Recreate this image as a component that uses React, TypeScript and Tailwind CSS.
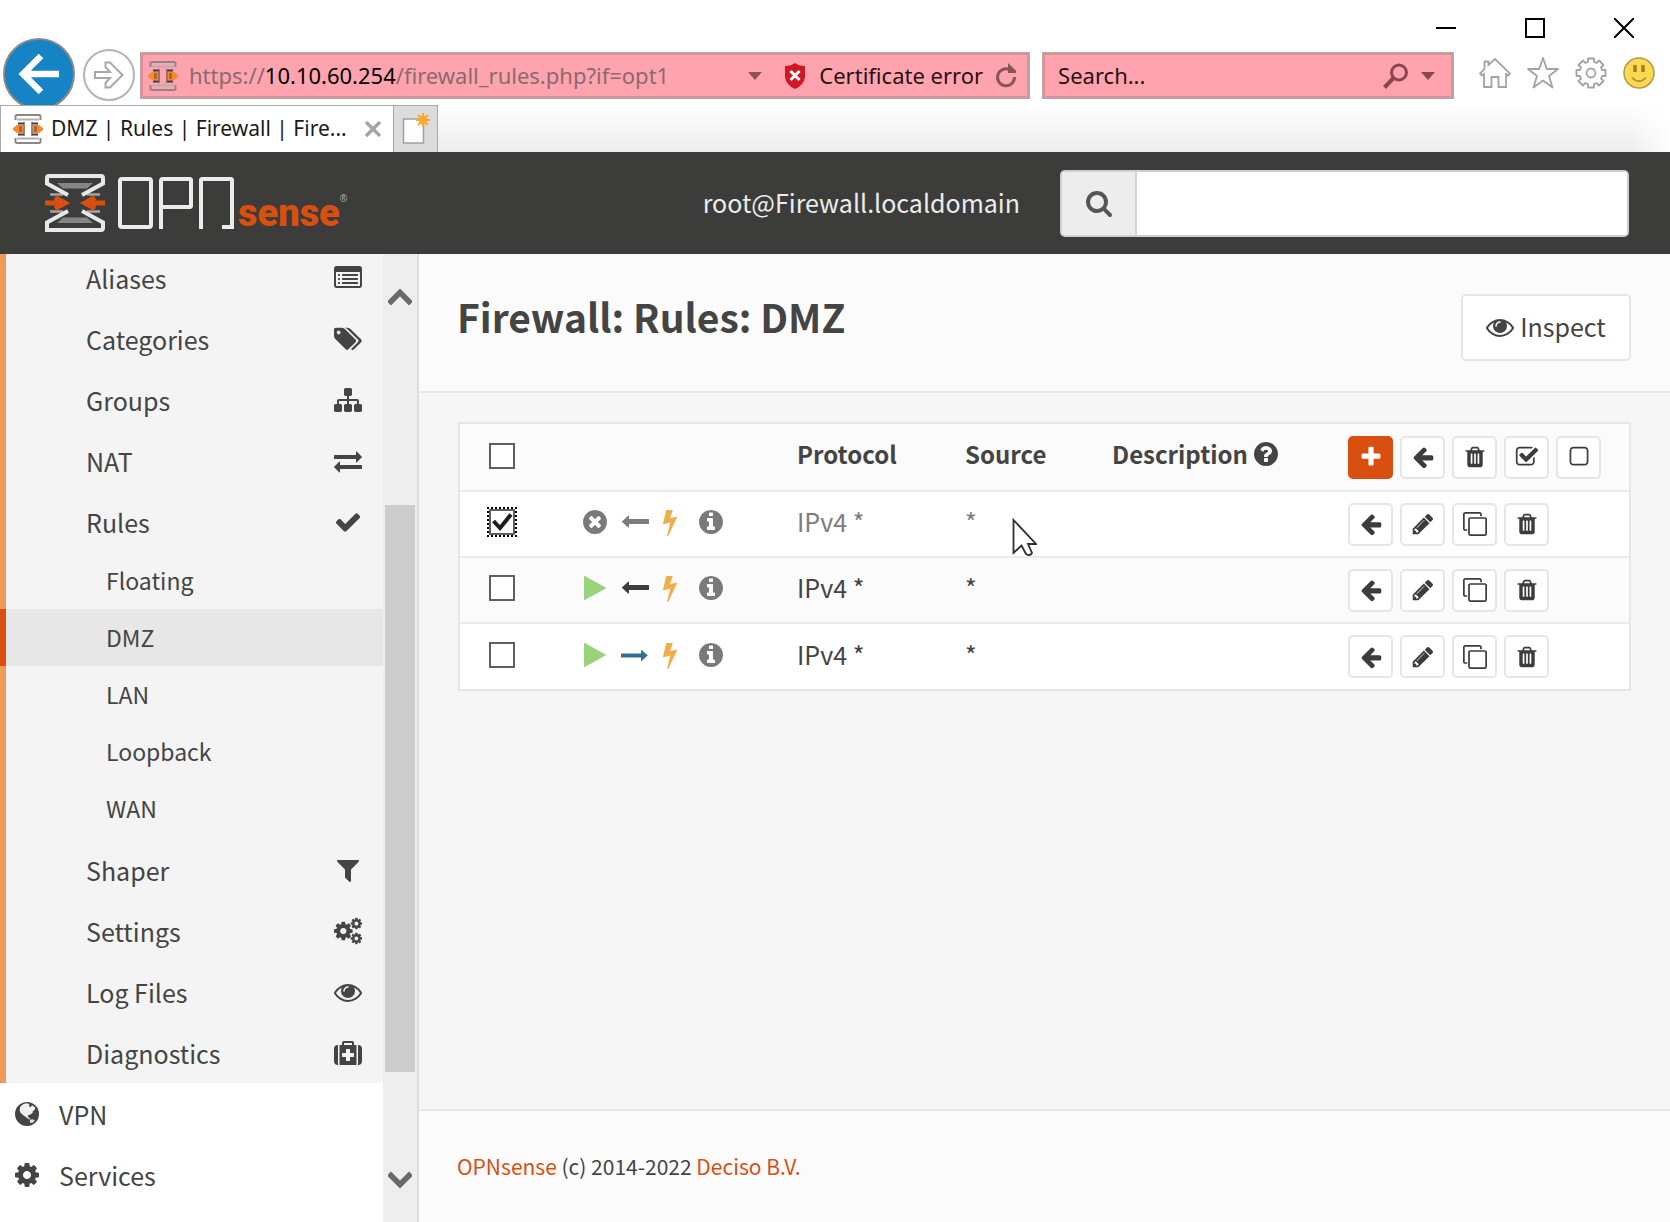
import React from "react";

const CIRCLE =
  "M1664 896q0 209-103 385.5t-279.5 279.5-385.5 103-385.5-103-279.5-279.5-103-385.5 103-385.5 279.5-279.5 385.5-103 385.5 103 279.5 279.5 103 385.5z";

const COG =
  "M1152 896q0-106-75-181t-181-75-181 75-75 181 75 181 181 75 181-75 75-181zm512-109v222q0 12-8 23t-20 13l-185 28q-19 54-39 91 35 50 107 138 10 12 10 25t-9 23q-27 37-99 108t-94 71q-12 0-26-9l-138-108q-44 23-91 38-16 136-29 186-7 28-36 28h-222q-14 0-24.5-8.5t-11.5-21.5l-28-184q-49-16-90-37l-141 107q-10 9-25 9-14 0-25-11-126-114-165-168-7-10-7-23 0-12 8-23 15-21 51-66.5t54-70.5q-27-50-41-99l-183-27q-13-2-21-12.5t-8-23.5v-222q0-12 8-23t19-13l186-28q14-46 39-92-40-57-107-138-10-12-10-24 0-10 9-23 26-36 98.5-107.5t94.5-71.5q13 0 26 10l138 107q44-23 91-38 16-136 29-186 7-28 36-28h222q14 0 24.5 8.5t11.5 21.5l28 184q49 16 90 37l142-107q9-9 24-9 13 0 25 10 129 119 165 170 7 8 7 22 0 12-8 23-15 21-51 66.5t-54 70.5q26 50 41 98l183 28q13 2 21 12.5t8 23.5z";

const LINE = "q0 13-9.5 22.5t-22.5 9.5h-960q-13 0-22.5-9.5t-9.5-22.5v-64q0-13 9.5-22.5t22.5-9.5h960q13 0 22.5 9.5t9.5 22.5z";
const DOT = "q0 13-9.5 22.5t-22.5 9.5h-64q-13 0-22.5-9.5t-9.5-22.5v-64q0-13 9.5-22.5t22.5-9.5h64q13 0 22.5 9.5t9.5 22.5z";

const PATHS = {
  arrowLeft:
    "M1664 896v128q0 53-32.5 90.5t-84.5 37.5h-704l293 294q38 36 38 90t-38 90l-75 76q-37 37-90 37-52 0-91-37l-651-652q-37-37-37-90 0-52 37-91l651-650q38-38 91-38 52 0 90 38l75 74q38 38 38 91t-38 91l-293 293h704q52 0 84.5 37.5t32.5 90.5z",
  check:
    "M1671 566q0 40-28 68l-724 724-136 136q-28 28-68 28t-68-28l-136-136-362-362q-28-28-28-68t28-68l136-136q28-28 68-28t68 28l294 295 656-657q28-28 68-28t68 28l136 136q28 28 28 68z",
  plus: "M1600 736v192q0 40-28 68t-68 28h-416v416q0 40-28 68t-68 28h-192q-40 0-68-28t-28-68v-416h-416q-40 0-68-28t-28-68v-192q0-40 28-68t68-28h416v-416q0-40 28-68t68-28h192q40 0 68 28t28 68v416h416q40 0 68 28t28 68z",
  search:
    "M1216 832q0-185-131.5-316.5t-316.5-131.5-316.5 131.5-131.5 316.5 131.5 316.5 316.5 131.5 316.5-131.5 131.5-316.5zm512 832q0 52-38 90t-90 38q-54 0-90-38l-343-342q-179 124-399 124-143 0-273.5-55.5t-225-150-150-225-55.5-273.5 55.5-273.5 150-225 225-150 273.5-55.5 273.5 55.5 225 150 150 225 55.5 273.5q0 220-124 399l343 343q37 37 37 90z",
  filter:
    "M1595 295q17 41-14 70l-493 493v742q0 42-39 59-13 5-25 5-27 0-45-19l-256-256q-19-19-19-45v-486l-493-493q-31-29-14-70 17-39 59-39h1280q42 0 59 39z",
  trash:
    "M704 1376v-704q0-14-9-23t-23-9h-64q-14 0-23 9t-9 23v704q0 14 9 23t23 9h64q14 0 23-9t9-23zm256 0v-704q0-14-9-23t-23-9h-64q-14 0-23 9t-9 23v704q0 14 9 23t23 9h64q14 0 23-9t9-23zm256 0v-704q0-14-9-23t-23-9h-64q-14 0-23 9t-9 23v704q0 14 9 23t23 9h64q14 0 23-9t9-23zm-544-992h448l-48-117q-7-9-17-11h-317q-10 2-17 11zm928 32v64q0 14-9 23t-23 9h-96v948q0 83-47 143.5t-113 60.5h-832q-66 0-113-58.5t-47-141.5v-952h-96q-14 0-23-9t-9-23v-64q0-14 9-23t23-9h309l70-167q15-37 54-63t79-26h320q40 0 79 26t54 63l70 167h309q14 0 23 9t9 23z",
  pencil:
    "M491 1536l91-91-235-235-91 91v107h128v128h107zm523-928q0-22-22-22-10 0-17 7l-542 542q-7 7-7 17 0 22 22 22 10 0 17-7l542-542q7-7 7-17zm-54-192l416 416-832 832h-416v-416zm683 96q0 53-37 90l-166 166-416-416 166-165q36-38 90-38 53 0 91 38l235 234q37 39 37 91z",
  clone:
    "M1664 1632v-1088q0-13-9.5-22.5t-22.5-9.5h-1088q-13 0-22.5 9.5t-9.5 22.5v1088q0 13 9.5 22.5t22.5 9.5h1088q13 0 22.5-9.5t9.5-22.5zm128-1088v1088q0 66-47 113t-113 47h-1088q-66 0-113-47t-47-113v-1088q0-66 47-113t113-47h1088q66 0 113 47t47 113zm-384-384v160h-128v-160q0-13-9.5-22.5t-22.5-9.5h-1088q-13 0-22.5 9.5t-9.5 22.5v1088q0 13 9.5 22.5t22.5 9.5h160v128h-160q-66 0-113-47t-47-113v-1088q0-66 47-113t113-47h1088q66 0 113 47t47 113z",
  checkSquare:
    "M1472 930v318q0 119-84.5 203.5t-203.5 84.5h-832q-119 0-203.5-84.5t-84.5-203.5v-832q0-119 84.5-203.5t203.5-84.5h832q63 0 117 25 15 7 18 23 3 17-9 29l-49 49q-10 10-23 10-3 0-9-2-23-6-45-6h-832q-66 0-113 47t-47 113v832q0 66 47 113t113 47h832q66 0 113-47t47-113v-254q0-13 9-22l64-64q10-10 23-10 6 0 12 3 20 8 20 29zm231-489l-814 814q-24 24-57 24t-57-24l-430-430q-24-24-24-57t24-57l110-110q24-24 57-24t57 24l263 263 647-647q24-24 57-24t57 24l110 110q24 24 24 57t-24 57z",
  square:
    "M1312 256h-832q-66 0-113 47t-47 113v832q0 66 47 113t113 47h832q66 0 113-47t47-113v-832q0-66-47-113t-113-47zm288 160v832q0 119-84.5 203.5t-203.5 84.5h-832q-119 0-203.5-84.5t-84.5-203.5v-832q0-119 84.5-203.5t203.5-84.5h832q119 0 203.5 84.5t84.5 203.5z",
  eye: "M1664 960q-152-236-381-353 61 104 61 225 0 185-131.5 316.5t-316.5 131.5-316.5-131.5-131.5-316.5q0-121 61-225-229 117-381 353 133 205 333.5 326.5t434.5 121.5 434.5-121.5 333.5-326.5zm-720-384q0-20-14-34t-34-14q-125 0-214.5 89.5t-89.5 214.5q0 20 14 34t34 14 34-14 14-34q0-86 61-147t147-61q20 0 34-14t14-34zm848 384q0 34-20 69-140 230-376.5 368.5t-499.5 138.5-499.5-139-376.5-368q-20-35-20-69t20-69q140-229 376.5-368t499.5-139 499.5 139 376.5 368q20 35 20 69z",
  timesCircle:
    "M1277 1122q0-26-19-45l-181-181 181-181q19-19 19-45 0-27-19-46l-90-90q-19-19-46-19-26 0-45 19l-181 181-181-181q-19-19-45-19-27 0-46 19l-90 90q-19 19-19 46 0 26 19 45l181 181-181 181q-19 19-19 45 0 27 19 46l90 90q19 19 46 19 26 0 45-19l181-181 181 181q19 19 45 19 27 0 46-19l90-90q19-19 19-46z" +
    CIRCLE,
  info:
    "M1152 1376v-160q0-14-9-23t-23-9h-96v-512q0-14-9-23t-23-9h-320q-14 0-23 9t-9 23v160q0 14 9 23t23 9h96v320h-96q-14 0-23 9t-9 23v160q0 14 9 23t23 9h448q14 0 23-9t9-23zm-128-896v-160q0-14-9-23t-23-9h-192q-14 0-23 9t-9 23v160q0 14 9 23t23 9h192q14 0 23-9t9-23z" +
    CIRCLE,
  question:
    "M1024 1376v-192q0-14-9-23t-23-9h-192q-14 0-23 9t-9 23v192q0 14 9 23t23 9h192q14 0 23-9t9-23zm256-672q0-88-55.5-163t-138.5-116-170-41q-243 0-371 213-15 24 8 42l132 100q7 6 19 6 16 0 25-12 53-68 86-92 34-24 86-24 48 0 85.5 26t37.5 59q0 38-20 61t-68 45q-63 28-115.5 86.5t-52.5 125.5v36q0 14 9 23t23 9h192q14 0 23-9t9-23q0-19 21.5-49.5t54.5-49.5q32-18 49-28.5t46-35 44.5-48 28-60.5 12.5-81z" +
    CIRCLE,
  play: "M1576 927l-1328 738q-23 13-39.5 3t-16.5-36v-1472q0-26 16.5-36t39.5 3l1328 738q23 13 23 31t-23 31z",
  bolt: "M1333 566q18 20 7 44l-540 1157q-13 25-42 25-4 0-14-2-17-5-25.5-19t-4.5-30l197-808-406 101q-4 1-12 1-18 0-31-11-18-15-13-39l201-825q4-14 16-23t28-9h328q19 0 32 12.5t13 29.5q0 8-5 18l-171 463 396-98q8-2 12-2 19 0 34 15z",
  longLeft:
    "M1792 800v192q0 14-9 23t-23 9h-1248v192q0 21-19 29t-35-5l-384-350q-10-10-10-23 0-14 10-24l384-354q16-14 35-6 19 9 19 29v192h1248q14 0 23 9t9 23z",
  longRight:
    "M1728 893q0 14-10 24l-384 354q-16 14-35 6-19-9-19-29v-192h-1248q-14 0-23-9t-9-23v-192q0-14 9-23t23-9h1248v-192q0-21 19-29t35 5l384 350q10 10 10 23z",
  exchange:
    "M1792 1184v192q0 13-9.5 22.5t-22.5 9.5h-1376v192q0 13-9.5 22.5t-22.5 9.5q-12 0-24-10l-319-320q-9-9-9-22 0-14 9-23l320-320q9-9 23-9 13 0 22.5 9.5t9.5 22.5v192h1376q13 0 22.5 9.5t9.5 22.5zm0-544q0 14-9 23l-320 320q-9 9-23 9-13 0-22.5-9.5t-9.5-22.5v-192h-1376q-13 0-22.5-9.5t-9.5-22.5v-192q0-13 9.5-22.5t22.5-9.5h1376v-192q0-14 9-23t23-9q12 0 24 10l319 319q9 9 9 23z",
  sitemap:
    "M1792 1248v320q0 40-28 68t-68 28h-320q-40 0-68-28t-28-68v-320q0-40 28-68t68-28h96v-192h-512v192h96q40 0 68 28t28 68v320q0 40-28 68t-68 28h-320q-40 0-68-28t-28-68v-320q0-40 28-68t68-28h96v-192h-512v192h96q40 0 68 28t28 68v320q0 40-28 68t-68 28h-320q-40 0-68-28t-28-68v-320q0-40 28-68t68-28h96v-192q0-52 38-90t90-38h512v-192h-96q-40 0-68-28t-28-68v-320q0-40 28-68t68-28h320q40 0 68 28t28 68v320q0 40-28 68t-68 28h-96v192h512q52 0 90 38t38 90v192h96q40 0 68 28t28 68z",
  listAlt:
    "M384 1184v64" + DOT + "M384 928v64" + DOT + "M384 672v64" + DOT +
    "M1536 1184v64" + LINE + "M1536 928v64" + LINE + "M1536 672v64" + LINE +
    "M1664 1376v-832q0-13-9.5-22.5t-22.5-9.5h-1472q-13 0-22.5 9.5t-9.5 22.5v832q0 13 9.5 22.5t22.5 9.5h1472q13 0 22.5-9.5t9.5-22.5zm128-1088v1088q0 66-47 113t-113 47h-1472q-66 0-113-47t-47-113v-1088q0-66 47-113t113-47h1472q66 0 113 47t47 113z",
  tags: "M448 448q0-53-37.5-90.5t-90.5-37.5-90.5 37.5-37.5 90.5 37.5 90.5 90.5 37.5 90.5-37.5 37.5-90.5zm1067 576q0 53-37 90l-491 492q-39 37-91 37-53 0-90-37l-715-716q-38-37-64.5-101t-26.5-117v-416q0-52 38-90t90-38h416q53 0 117 26.5t102 64.5l715 714q37 39 37 91zm384 0q0 53-37 90l-491 492q-39 37-91 37-36 0-59-14t-53-45l470-470q37-37 37-90 0-52-37-91l-715-714q-38-38-102-64.5t-117-26.5h224q53 0 117 26.5t102 64.5l715 714q37 39 37 91z",
  medkit:
    "M1280 1120v-192q0-14-9-23t-23-9h-224v-224q0-14-9-23t-23-9h-192q-14 0-23 9t-9 23v224h-224q-14 0-23 9t-9 23v192q0 14 9 23t23 9h224v224q0 14 9 23t23 9h192q14 0 23-9t9-23v-224h224q14 0 23-9t9-23zm-640-736h512v-128h-512v128zM256 384v1280h-32q-92 0-158-66t-66-158v-832q0-92 66-158t158-66h32zM1440 384v1280h-1088v-1280h160v-160q0-40 28-68t68-28h576q40 0 68 28t28 68v160h160zm352 224v832q0 92-66 158t-158 66h-32v-1280h32q92 0 158 66t66 158z",
  cog: COG,
};

type IconName = keyof typeof PATHS | "cogs" | "globe";

function Icon({ name, className = "" }: { name: IconName; className?: string }) {
  if (name === "cogs") {
    return (
      <svg viewBox="0 0 1920 1792" fill="currentColor" fillRule="evenodd" className={className} aria-hidden="true">
        <g transform="translate(-107 149) scale(.833)"><path d={COG} /></g>
        <g transform="translate(1074 -78) scale(.515)"><path d={COG} /></g>
        <g transform="translate(1074 946) scale(.515)"><path d={COG} /></g>
      </svg>
    );
  }
  if (name === "globe") {
    return (
      <svg viewBox="0 0 24 24" className={className} aria-hidden="true">
        <circle cx="12" cy="12" r="10.3" fill="currentColor" />
        <path
          d="M9.500 3.200 12.600 2.800 14.200 4 13.600 5.600 15 6 16.400 4.600 19 6.400 18.600 8.400 17 9.600 16.600 11.400 14.800 12.400 12.400 13.600 13.600 15.200 15 16 14 16.800 9.400 13.400 6.400 11 5.600 8.600 6.400 5.400Z"
          fill="#fff"
          opacity=".92"
        />
        <path d="M14.400 17 17 16.600 18.800 17.800 16.800 19.600 14.600 19.600Z" fill="#fff" opacity=".85" />
      </svg>
    );
  }
  const wide = name === "tags";
  return (
    <svg
      viewBox={wide ? "0 0 1920 1792" : "0 0 1792 1792"}
      fill="currentColor"
      fillRule="evenodd"
      className={className}
      aria-hidden="true"
    >
      <path d={PATHS[name]} />
    </svg>
  );
}

function Favicon() {
  return (
    <svg viewBox="0 0 30 32" className="h-8 w-[30px] shrink-0" fill="none" aria-hidden="true">
      <path d="M2.500 7V3.500Q2.500 2 4 2H26Q27.500 2 27.500 3.500V7M2.500 25V28.500Q2.500 30 4 30H26Q27.500 30 27.500 28.500V25" stroke="#8c8787" strokeWidth="2" />
      <path d="M4 6.500H26M4 25.500H26" stroke="#b5afaf" strokeWidth="2" />
      <path d="M5 10.500H11M19 10.500H25M5 21.500H11M19 21.500H25" stroke="#3d3a3a" strokeWidth="2" />
      <path d="M11 9V23M19 9V23" stroke="#6b6565" strokeWidth="1.500" />
      <path d="M0 15 4 12H10V20H4L0 17ZM30 15 26 12H20V20H26L30 17Z" fill="#f58a35" />
      <path d="M6 13H9V19H6ZM21 13H24V19H21Z" fill="#c75f14" />
    </svg>
  );
}

function LogoMark() {
  return (
    <svg viewBox="0 0 60 58" className="h-[58px] w-[60px] shrink-0" fill="none" aria-hidden="true">
      <path d="M12 9H48L42 14.500H18ZM18 43.500H42L48 49H12Z" fill="#858583" />
      <path d="M5 20.500H18M42 20.500H55M5 37.500H18M42 37.500H55" stroke="#a5a5a3" strokeWidth="2.500" />
      <path
        d="M23 21 2 9.500V4Q2 2 4 2H56Q58 2 58 4V9.500L37 21M23 37 2 48.500V56H56Q58 56 58 54V48.500L37 37"
        stroke="#e8e8e8"
        strokeWidth="4"
      />
      <path d="M0 29H20M10 23.500 20 29 10 34.500M60 29H40M50 23.500 40 29 50 34.500" stroke="#d94f10" strokeWidth="5" />
    </svg>
  );
}

const menu: { label: string; icon: IconName; sub?: string[] }[] = [
  { label: "Aliases", icon: "listAlt" },
  { label: "Categories", icon: "tags" },
  { label: "Groups", icon: "sitemap" },
  { label: "NAT", icon: "exchange" },
  { label: "Rules", icon: "check", sub: ["Floating", "DMZ", "LAN", "Loopback", "WAN"] },
  { label: "Shaper", icon: "filter" },
  { label: "Settings", icon: "cogs" },
  { label: "Log Files", icon: "eye" },
  { label: "Diagnostics", icon: "medkit" },
];

const rules: { enabled: boolean; dir: "longLeft" | "longRight"; dirColor: string; checked: boolean }[] = [
  { enabled: false, dir: "longLeft", dirColor: "text-[#7d7d7d]", checked: true },
  { enabled: true, dir: "longLeft", dirColor: "text-[#3c3c3b]", checked: false },
  { enabled: true, dir: "longRight", dirColor: "text-[#31708f]", checked: false },
];

function Check({ label, checked = false }: { label: string; checked?: boolean }) {
  return (
    <label className="ml-[29px] grid size-[26px] place-items-center">
      <input
        type="checkbox"
        aria-label={label}
        defaultChecked={checked}
        className={
          "peer col-start-1 row-start-1 size-[26px] appearance-none border-2 border-[#606060] bg-white " +
          (checked ? "outline-2 outline-dotted outline-black" : "")
        }
      />
      <svg viewBox="0 0 26 26" fill="none" className="pointer-events-none invisible col-start-1 row-start-1 size-[26px] peer-checked:visible">
        <path d="M4.500 12 11 19 22 5.500" stroke="#1c1c1c" strokeWidth="4" />
      </svg>
    </label>
  );
}

function Tool({ icon, label, primary = false }: { icon: IconName; label: string; primary?: boolean }) {
  return (
    <button
      type="button"
      aria-label={label}
      className={
        "grid h-[43px] w-[45px] shrink-0 place-items-center rounded-[5px] border-2 " +
        (primary ? "border-[#d94f10] bg-[#d94f10] text-white" : "border-[#e6e6e6] bg-white text-[#3c3c3b]")
      }
    >
      <Icon name={icon} className="size-6" />
    </button>
  );
}

function Browser() {
  return (
    <div className="shrink-0 bg-white font-['Noto_Sans',sans-serif] text-[22px] text-[#1a1a1a]">
      <div className="flex h-[38px] items-end justify-end gap-[69px] pr-[36px]">
        <button type="button" aria-label="Minimize">
          <svg viewBox="0 0 20 20" className="size-5" stroke="#000" strokeWidth="2"><path d="M0 10H20" /></svg>
        </button>
        <button type="button" aria-label="Maximize">
          <svg viewBox="0 0 20 20" className="size-5" stroke="#000" strokeWidth="2" fill="none"><path d="M1 1H19V19H1Z" /></svg>
        </button>
        <button type="button" aria-label="Close">
          <svg viewBox="0 0 20 20" className="size-5" stroke="#000" strokeWidth="2"><path d="M0 0 20 20M20 0 0 20" /></svg>
        </button>
      </div>
      <div className="flex h-[67px] items-start pl-[3px] pr-[15px]">
        <button type="button" aria-label="Back" className="grid size-[72px] shrink-0 place-items-center rounded-full border-2 border-[#8a8a8a] bg-[#1583c4]">
          <svg viewBox="0 0 42 42" className="size-[42px]" fill="none" stroke="#fff" strokeWidth="6.500"><path d="M41 21H6M23 3 5 21 23 39" /></svg>
        </button>
        <button type="button" aria-label="Forward" className="mt-[11px] ml-2 grid size-[52px] shrink-0 place-items-center rounded-full border-2 border-[#b4b4b4]">
          <svg viewBox="0 0 32 32" className="size-8" fill="none" stroke="#a8a8a8" strokeWidth="2"><path d="M2 13H17L12.500 8V3.500H17L29.500 16 17 28.500H12.500V24L17 19H2Z" /></svg>
        </button>
        <div className="mt-[14px] ml-[5px] flex h-[47px] min-w-0 flex-[867] items-center border-2 border-[#b9a3a6] bg-[#ffa4ae] pr-[11px] pl-[6px] ring-1 ring-[#ef8593] ring-inset">
          <Favicon />
          <div role="textbox" aria-label="Address" tabIndex={0} className="ml-[11px] min-w-0 flex-1 truncate text-[#8a6a6e]">
            https://<span className="text-black">10.10.60.254</span>/firewall_rules.php?if=opt1
          </div>
          <button type="button" aria-label="Show address list" className="mr-[22px]">
            <svg viewBox="0 0 14 8" className="h-2 w-[14px]" fill="#8b545b"><path d="M0 0H14L7 8Z" /></svg>
          </button>
          <svg viewBox="0 0 22 26" className="h-[26px] w-[22px]" aria-hidden="true">
            <path d="M11 0Q15 3 21 3V14Q20 22 11 26 2 22 1 14V3Q7 3 11 0Z" fill="#d01825" />
            <path d="M6.500 8 15.500 17M15.500 8 6.500 17" stroke="#fff" strokeWidth="3" />
          </svg>
          <span className="ml-[13px] whitespace-nowrap text-[#2a1013]">Certificate error</span>
          <button type="button" aria-label="Refresh" className="ml-3">
            <svg viewBox="0 0 22 26" className="h-[26px] w-[22px]" fill="none" stroke="#8b545b" strokeWidth="3">
              <path d="M14.500 6.500A8.500 8.500 0 1 0 19.500 14" />
              <path d="M13 0V10H21V7.500Z" fill="#8b545b" stroke="none" />
            </svg>
          </button>
        </div>
        <div className="mt-[14px] ml-3 flex h-[47px] min-w-0 flex-[376] items-center border-2 border-[#b9a3a6] bg-[#ffa4ae] pr-[17px] pl-[14px] ring-1 ring-[#ef8593] ring-inset">
          <input type="text" aria-label="Search the web" placeholder="Search..." className="min-w-0 flex-1 bg-transparent outline-none placeholder:text-[#2a1013] placeholder:opacity-100" />
          <button type="button" aria-label="Search">
            <svg viewBox="0 0 26 26" className="size-[26px]" fill="none" stroke="#8b454d" strokeWidth="3"><circle cx="16" cy="9.500" r="7.500" /><path d="M10.500 15 1.500 24.500" strokeWidth="4" /></svg>
          </button>
          <button type="button" aria-label="Search options" className="ml-3">
            <svg viewBox="0 0 14 8" className="h-2 w-[14px]" fill="#8b454d"><path d="M0 0H14L7 8Z" /></svg>
          </button>
        </div>
        <div className="mt-[19px] ml-[25px] flex shrink-0 gap-4">
          <button type="button" aria-label="Home">
            <svg viewBox="0 0 32 32" className="size-8" fill="none" stroke="#a3a3a3" strokeWidth="1.800"><path d="M16 2 9.500 8V4.500H5.500V12L1 16.500 3 18.500 5 17V30H12.500V20H19.500V30H27V17L29 18.500 31 16.500Z" /></svg>
          </button>
          <button type="button" aria-label="Favorites">
            <svg viewBox="0 0 32 32" className="size-8" fill="none" stroke="#a3a3a3" strokeWidth="1.800" strokeLinejoin="round"><path d="M16 1 19.800 12H31L22 19 25.500 30.500 16 23.500 6.500 30.500 10 19 1 12H12.200Z" /></svg>
          </button>
          <button type="button" aria-label="Tools">
            <svg viewBox="0 0 32 32" className="size-8" fill="none" stroke="#a3a3a3" strokeWidth="1.800" strokeLinejoin="round">
              <path d="M13 5V1.500H19V5L21.500 6 24 3.500 28.500 8 26 10.500 27 13H30.500V19H27L26 21.500 28.500 24 24 28.500 21.500 26 19 27V30.500H13V27L10.500 26 8 28.500 3.500 24 6 21.500 5 19H1.500V13H5L6 10.500 3.500 8 8 3.500 10.500 6Z" />
              <circle cx="16" cy="16" r="4.500" />
            </svg>
          </button>
          <button type="button" aria-label="Send feedback">
            <svg viewBox="0 0 32 32" className="size-8" fill="none">
              <circle cx="16" cy="16" r="15" fill="#ffd851" stroke="#b39a4c" strokeWidth="1.500" />
              <path d="M12 8V15M20 8V15" stroke="#a07f2a" strokeWidth="3.500" />
              <path d="M9 20.500Q16 28 23 20.500" stroke="#b08f38" strokeWidth="1.800" />
            </svg>
          </button>
        </div>
      </div>
      <div className="flex h-[47px] bg-linear-to-b from-white to-[#ececec]">
        <div className="flex w-[394px] items-center border border-b-0 border-[#a9a9a9] bg-white pl-3">
          <Favicon />
          <span className="ml-2 text-[21px] whitespace-nowrap">DMZ | Rules | Firewall | Fire...</span>
          <button type="button" aria-label="Close tab" className="mr-3 ml-auto">
            <svg viewBox="0 0 16 16" className="size-4" stroke="#a5a5a5" strokeWidth="3.500"><path d="M1 1 15 15M15 1 1 15" /></svg>
          </button>
        </div>
        <button type="button" aria-label="New tab" className="grid w-11 place-items-center border border-b-0 border-l-0 border-[#a9a9a9] bg-[#dcdcdc]">
          <svg viewBox="0 0 30 34" className="h-[34px] w-[30px]" fill="none">
            <path d="M2.500 7H22.500V31H2.500Z" fill="#fdfdfd" stroke="#a0a0a0" strokeWidth="1.500" />
            <circle cx="22" cy="8" r="4.500" fill="#f5ab2e" />
            <path d="M22 1V15M15 8H29M17 3 27 13M27 3 17 13" stroke="#f5ab2e" strokeWidth="2" />
          </svg>
        </button>
        <div className="ml-auto w-10 bg-linear-to-r from-transparent to-white" />
      </div>
    </div>
  );
}

function Header() {
  return (
    <header className="flex h-[102px] shrink-0 items-center bg-[#3c3c3b] pr-[41px] pl-[45px]">
      <a href="#home" aria-label="OPNsense" className="flex items-end">
        <LogoMark />
        <span className="mb-[3px] ml-[13px] h-[52px] w-[35px] rounded-sm border-4 border-[#ececec]" />
        <span className="mb-[3px] ml-[6px] h-[52px] w-[34px] rounded-tl-sm border-l-4 border-[#ececec]">
          <span className="block h-[32px] w-[30px] rounded-r-sm border-4 border-l-0 border-[#ececec]" />
        </span>
        <span className="mb-[3px] ml-[6px] flex h-[52px] w-[35px] items-end justify-end rounded-t-sm border-4 border-b-0 border-[#ececec]">
          <span className="h-1 w-2 bg-[#ececec]" />
        </span>
        <span className="ml-1 font-['Roboto',sans-serif] text-[38px] leading-[38px] font-black text-[#d94f10]">sense</span>
        <span className="mb-[28px] font-['Liberation_Sans',sans-serif] text-[10px] leading-none text-[#b5b5b5]">®</span>
      </a>
      <span className="ml-auto text-[25px] whitespace-nowrap text-[#ececec]">root@Firewall.localdomain</span>
      <form className="ml-10 flex h-[67px] w-[569px] overflow-hidden rounded-[5px] border-2 border-[#cfcfcf] bg-white">
        <button type="button" aria-label="Search menu" className="grid w-[75px] place-items-center border-r-2 border-[#d2d2d2] bg-[#ededed] text-[#555]">
          <Icon name="search" className="size-7" />
        </button>
        <input type="text" aria-label="Search" className="min-w-0 flex-1 bg-white px-4 text-2xl outline-none" />
      </form>
    </header>
  );
}

function Sidebar() {
  return (
    <aside className="flex w-[419px] shrink-0 overflow-hidden border-r-2 border-[#dedede] bg-white">
      <nav className="-mt-[7px] flex-1 text-[25px] leading-8">
        <ul className="border-l-[6px] border-[#f19a57] bg-[#f4f4f4]">
          {menu.map((m) => (
            <li key={m.label}>
              <a href="#menu" className="flex h-[61px] items-center justify-between pr-[21px] pl-20">
                {m.label}
                <Icon name={m.icon} className="size-7" />
              </a>
              {m.sub && (
                <ul className="pb-0.5 text-[23px]">
                  {m.sub.map((s) => (
                    <li key={s}>
                      <a
                        href="#rules"
                        className={
                          "-ml-[6px] flex h-[57px] items-center border-l-[6px] pb-0.5 pl-[100px] " +
                          (s === "DMZ" ? "border-[#d94f10] bg-[#e7e7e7]" : "border-transparent")
                        }
                      >
                        {s}
                      </a>
                    </li>
                  ))}
                </ul>
              )}
            </li>
          ))}
        </ul>
        <ul>
          <li>
            <a href="#vpn" className="flex h-[61px] items-center pl-[13px]"><Icon name="globe" className="mr-[18px] size-7" />VPN</a>
          </li>
          <li>
            <a href="#services" className="flex h-[61px] items-center pl-[13px]"><Icon name="cog" className="mr-[18px] size-7" />Services</a>
          </li>
        </ul>
      </nav>
      <div className="flex w-[34px] flex-col items-center bg-[#eeeeee] pt-8 pb-[31px]">
        <svg viewBox="0 0 24 20" className="h-5 w-6 shrink-0" fill="none" stroke="#6a6a6a" strokeWidth="5.500"><path d="M1 17.500 12 6.500 23 17.500" /></svg>
        <div className="flex-[199] basis-0" />
        <div className="w-[30px] flex-[567] basis-0 bg-[#cccccc]" />
        <div className="flex-[99] basis-0" />
        <svg viewBox="0 0 24 20" className="h-5 w-6 shrink-0" fill="none" stroke="#6a6a6a" strokeWidth="5.500"><path d="M1 2.500 12 13.500 23 2.500" /></svg>
      </div>
    </aside>
  );
}

function Rules() {
  return (
    <div className="border-2 border-[#e6e6e6]">
      <table className="w-full table-fixed border-collapse text-left text-[25px] leading-7">
        <colgroup>
          <col className="w-[121px]" />
          <col className="w-[216px]" />
          <col className="w-[168px]" />
          <col className="w-[147px]" />
          <col />
          <col className="w-[281px]" />
        </colgroup>
        <thead>
          <tr className="h-[67px] bg-[#fbfbfb] text-[24px]">
            <th className="pb-0.5"><Check label="Select all rules" /></th>
            <th />
            <th className="pb-1.5 font-bold">Protocol</th>
            <th className="pb-1.5 font-bold">Source</th>
            <th className="pb-1.5 font-bold">
              <span className="flex items-center gap-1">Description <Icon name="question" className="size-7" /></span>
            </th>
            <th>
              <div className="flex gap-[7px]">
                <Tool icon="plus" label="Add" primary />
                <Tool icon="arrowLeft" label="Move selected rules to end" />
                <Tool icon="trash" label="Delete selected" />
                <Tool icon="checkSquare" label="Enable selected" />
                <Tool icon="square" label="Disable selected" />
              </div>
            </th>
          </tr>
        </thead>
        <tbody>
          {rules.map((r, i) => (
            <tr
              key={i}
              className={
                "h-[66px] border-t-2 border-[#ebebeb] " +
                (i % 2 ? "bg-[#fbfbfb] " : "bg-white ") +
                (r.enabled ? "" : "text-[#7d7d7d]")
              }
            >
              <td className="pb-1"><Check label={"Select rule " + (i + 1)} checked={r.checked} /></td>
              <td className="pb-1">
                <div className="flex items-center">
                  <Icon name={r.enabled ? "play" : "timesCircle"} className={"size-7 " + (r.enabled ? "text-[#9bd27c]" : "text-[#7a7a7a]")} />
                  <Icon name={r.dir} className={"ml-3 size-7 " + r.dirColor} />
                  <Icon name="bolt" className="ml-[7px] size-7 text-[#f0ad4e]" />
                  <Icon name="info" className="ml-[13px] size-7 text-[#7a7a7a]" />
                </div>
              </td>
              <td className="pb-1.5">IPv4 *</td>
              <td className="pb-1.5">*</td>
              <td />
              <td>
                <div className="flex gap-[7px]">
                  <Tool icon="arrowLeft" label="Move selected rules before this rule" />
                  <Tool icon="pencil" label="Edit" />
                  <Tool icon="clone" label="Clone" />
                  <Tool icon="trash" label="Delete" />
                </div>
              </td>
            </tr>
          ))}
        </tbody>
      </table>
    </div>
  );
}

export default function App() {
  return (
    <div className="relative flex h-screen flex-col overflow-hidden bg-white font-['Noto_Sans_CJK_SC',sans-serif] text-[#444]">
      <Browser />
      <Header />
      <div className="flex min-h-0 flex-1">
        <Sidebar />
        <main className="flex min-w-0 flex-1 flex-col bg-[#f6f6f6]">
          <div className="flex h-[139px] shrink-0 items-start justify-between border-b-2 border-[#e8e8e8] bg-[#fbfbfb] pr-[39px] pl-[38px]">
            <h1 className="mt-[39px] text-[39px] leading-[46px] font-bold">Firewall: Rules: DMZ</h1>
            <button type="button" className="mt-10 flex h-[67px] w-[170px] items-center justify-center gap-[6px] rounded-[5px] border-2 border-[#e6e6e6] bg-white pb-0.5 text-[25px]">
              <Icon name="eye" className="size-7" />
              Inspect
            </button>
          </div>
          <div className="flex-1 pt-[29px] pr-[39px] pl-[39px]">
            <Rules />
          </div>
          <footer className="flex h-[113px] shrink-0 items-center border-t-2 border-[#e8e8e8] bg-[#fbfbfb] pl-[38px] text-[21px]">
            <p>
              <a href="#opnsense" className="text-[#d94f10]">OPNsense</a> (c) 2014-2022{" "}
              <a href="#deciso" className="text-[#d94f10]">Deciso B.V.</a>
            </p>
          </footer>
        </main>
      </div>
      <svg viewBox="0 0 25 39" className="pointer-events-none absolute top-[518px] left-[1012px] h-[39px] w-[25px]" fill="#fff" stroke="#2e2e38" strokeWidth="1.800" aria-hidden="true">
        <path d="M1.500 2V35L9.500 27.500 14 36Q18 38.500 20 35L16 26H24Z" />
      </svg>
    </div>
  );
}
